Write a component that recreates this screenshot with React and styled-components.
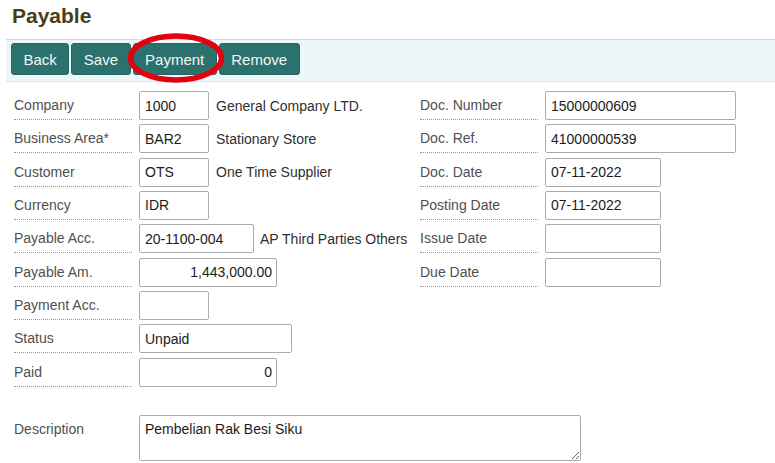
import React from "react";
import styled, { createGlobalStyle } from "styled-components";

const Global = createGlobalStyle`
  html, body { margin: 0; padding: 0; background: #ffffff; }
  body { font-family: "Liberation Sans", Arial, sans-serif; }
  * { box-sizing: border-box; }
`;

const Page = styled.div`
  width: 775px;
  height: 463px;
  overflow: hidden;
  background: #fff;
`;

const Title = styled.h1`
  margin: 0 0 0 12px;
  padding-top: 4px;
  font-size: 21px;
  line-height: 24px;
  font-weight: bold;
  color: #4b3c19;
`;

const Toolbar = styled.div`
  position: relative;
  margin: 11px 0 0 6px;
  padding: 3px 5px 6px;
  display: flex;
  gap: 2px;
  background: #ebf7f8;
  border-top: 1px solid #d2d9da;
  border-bottom: 1px solid #d3ebef;
`;

const Button = styled.button`
  height: 32px;
  padding: 0 11.5px;
  border: 1px solid #256663;
  border-radius: 3px;
  background: #2b726f;
  color: #f4f7f4;
  font-family: "Liberation Sans", Arial, sans-serif;
  font-size: 15px;
  cursor: pointer;
`;

const Highlight = styled.svg`
  position: absolute;
  left: 121.5px;
  top: -6.5px;
  width: 96px;
  height: 48px;
  pointer-events: none;
  overflow: visible;
`;

const Form = styled.div`
  margin-top: 9px;
  padding-left: 14px;
  display: grid;
  grid-template-columns: 406px 1fr;
`;

const Column = styled.div`
  display: flex;
  flex-direction: column;
  row-gap: 4.33px;
`;

const Row = styled.div`
  display: flex;
  align-items: center;
  height: 29px;
`;

const Label = styled.div`
  align-self: stretch;
  flex: 0 0 118px;
  padding-top: 6px;
  font-size: 14px;
  line-height: 16px;
  color: #505050;
  border-bottom: ${(p) => (p.$plain ? "none" : "1px dotted #9a9a9a")};
  white-space: nowrap;
`;

const Field = styled.input`
  margin-left: 7px;
  width: ${(p) => p.$w}px;
  height: 29px;
  padding: 0 4px 0 5px;
  border: 1px solid #ababab;
  border-radius: 2px;
  font-family: "Liberation Sans", Arial, sans-serif;
  font-size: 14px;
  color: #1c1c1c;
  text-align: ${(p) => p.$align || "left"};
  background: #fff;
  outline: none;
`;

const Aside = styled.span`
  margin-left: ${(p) => p.$gap || 7}px;
  font-size: 14px;
  color: #303030;
  white-space: nowrap;
`;

const DescRow = styled.div`
  margin-top: 28px;
  padding-left: 14px;
  display: flex;
  align-items: flex-start;
`;

const TextArea = styled.textarea`
  margin-left: 7px;
  width: 442px;
  height: 46px;
  padding: 5px 5px 4px;
  border: 1px solid #ababab;
  border-radius: 2px;
  font-family: "Liberation Sans", Arial, sans-serif;
  font-size: 14px;
  line-height: 16px;
  color: #1c1c1c;
  outline: none;
`;

const left = [
  { label: "Company", value: "1000", w: 70, aside: "General Company LTD." },
  { label: "Business Area*", value: "BAR2", w: 70, aside: "Stationary Store" },
  { label: "Customer", value: "OTS", w: 70, aside: "One Time Supplier" },
  { label: "Currency", value: "IDR", w: 70 },
  { label: "Payable Acc.", value: "20-1100-004", w: 115, aside: "AP Third Parties Others", gap: 6 },
  { label: "Payable Am.", value: "1,443,000.00", w: 138, align: "right" },
  { label: "Payment Acc.", value: "", w: 70 },
  { label: "Status", value: "Unpaid", w: 153 },
  { label: "Paid", value: "0", w: 138, align: "right" },
];

const right = [
  { label: "Doc. Number", value: "15000000609", w: 191 },
  { label: "Doc. Ref.", value: "41000000539", w: 191 },
  { label: "Doc. Date", value: "07-11-2022", w: 116 },
  { label: "Posting Date", value: "07-11-2022", w: 116 },
  { label: "Issue Date", value: "", w: 116 },
  { label: "Due Date", value: "", w: 116 },
];

function FieldRow({ item }) {
  return (
    <Row>
      <Label>{item.label}</Label>
      <Field readOnly $w={item.w} $align={item.align} defaultValue={item.value} />
      {item.aside && <Aside $gap={item.gap}>{item.aside}</Aside>}
    </Row>
  );
}

export default function App() {
  return (
    <Page>
      <Global />
      <Title>Payable</Title>
      <Toolbar>
        <Button>Back</Button>
        <Button>Save</Button>
        <Button>Payment</Button>
        <Button>Remove</Button>
        <Highlight viewBox="0 0 96 48">
          <ellipse cx="48" cy="24" rx="45.5" ry="22" fill="none" stroke="#e3000f" strokeWidth="5.5" />
        </Highlight>
      </Toolbar>
      <Form>
        <Column>
          {left.map((it) => (
            <FieldRow key={it.label} item={it} />
          ))}
        </Column>
        <Column>
          {right.map((it) => (
            <FieldRow key={it.label} item={it} />
          ))}
        </Column>
      </Form>
      <DescRow>
        <Label $plain>Description</Label>
        <TextArea readOnly defaultValue="Pembelian Rak Besi Siku" />
      </DescRow>
    </Page>
  );
}
